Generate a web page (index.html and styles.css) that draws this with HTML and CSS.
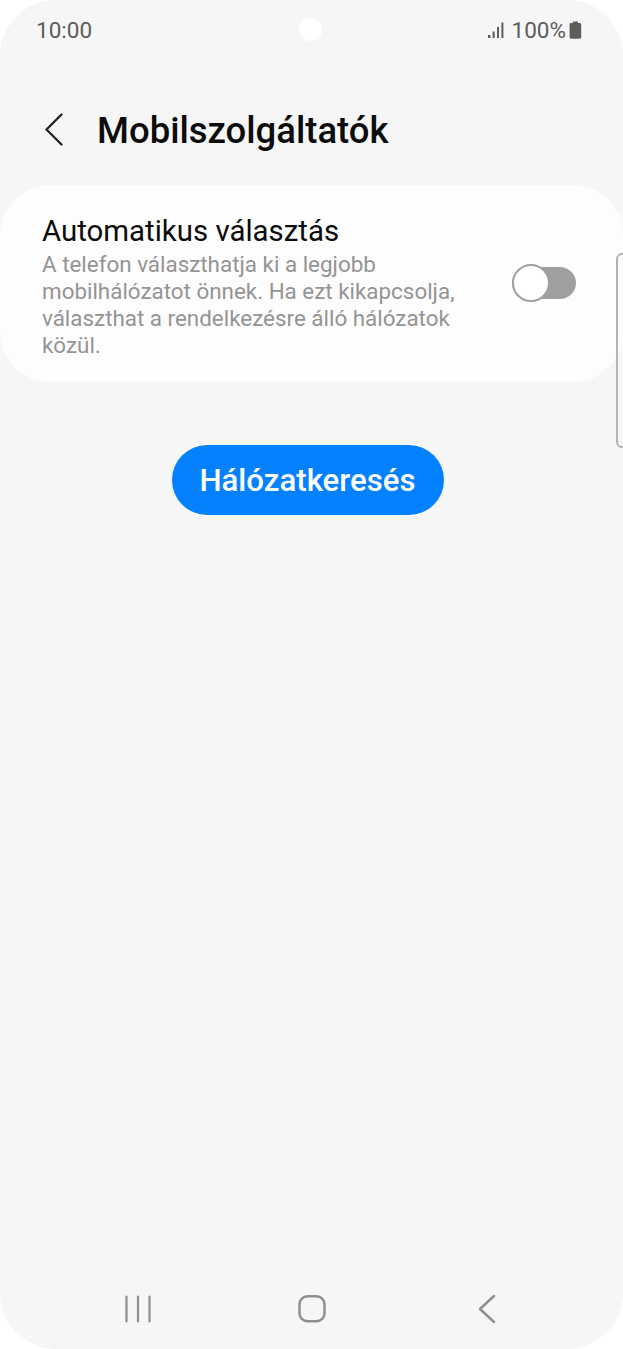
FILE: index.html
```html
<!DOCTYPE html>
<html>
<head>
    <title>Mobilszolgáltatók</title>
    <link rel="stylesheet" href="styles.css">
</head>
<body>
    <div class="phone">
        <!-- Status bar -->
        <div class="status-bar">
            <span class="time">10:00</span>
            <div class="camera"></div>
            <div class="status-right">
                <svg class="signal" width="17" height="17" viewBox="0 0 17 17">
                    <rect x="0" y="13" width="2.4" height="3" fill="#5c5c5c"/>
                    <rect x="4.6" y="9.5" width="2" height="6.5" fill="#5c5c5c"/>
                    <rect x="9" y="5" width="2" height="11" fill="#5c5c5c"/>
                    <rect x="13.4" y="0.5" width="2" height="15.5" fill="#5c5c5c"/>
                </svg>
                <span class="battery-text">100%</span>
                <svg class="battery" width="13" height="18" viewBox="0 0 13 18">
                    <path d="M4 0.5h5v1.6h1.6c1 0 1.6 0.7 1.6 1.6v12.4c0 1-0.7 1.6-1.6 1.6H2.2c-1 0-1.6-0.7-1.6-1.6V3.700c0-1 0.7-1.6 1.600-1.600H4z" fill="#5c5c5c"/>
                </svg>
            </div>
        </div>

        <!-- Header -->
        <div class="header">
            <svg class="back" width="20" height="34" viewBox="0 0 20 34">
                <path d="M17.500 1.500L2.500 16.500 17.500 31.500" fill="none" stroke="#222" stroke-width="2.300" stroke-linecap="round" stroke-linejoin="round"/>
            </svg>
            <h1 class="title">Mobilszolgáltatók</h1>
        </div>

        <!-- Setting card -->
        <div class="card">
            <div class="card-text">
                <h2 class="card-title">Automatikus választás</h2>
                <p class="card-desc">A telefon választhatja ki a legjobb mobilhálózatot önnek. Ha ezt kikapcsolja, választhat a rendelkezésre álló hálózatok közül.</p>
            </div>
            <div class="switch">
                <div class="knob"></div>
            </div>
        </div>

        <div class="actions">
            <button class="search-btn">Hálózatkeresés</button>
        </div>

        <div class="spacer"></div>

        <!-- Navigation bar -->
        <div class="nav-bar">
            <svg width="28" height="28" viewBox="0 0 28 28">
                <path d="M2.500 1.500V26.500M14 1.500V26.500M25.500 1.500V26.500" fill="none" stroke="#8e8e8e" stroke-width="2.200" stroke-linecap="round"/>
            </svg>
            <svg width="28" height="28" viewBox="0 0 28 28">
                <rect x="1.500" y="1.200" width="25" height="25" rx="8" fill="none" stroke="#8e8e8e" stroke-width="2.400"/>
            </svg>
            <svg width="18" height="30" viewBox="0 0 18 30">
                <path d="M16 1L2 14 16 27" fill="none" stroke="#8e8e8e" stroke-width="2.400" stroke-linecap="round" stroke-linejoin="round"/>
            </svg>
        </div>

        <!-- Edge panel handle -->
        <div class="edge-handle"></div>
    </div>
</body>
</html>
```

FILE: styles.css
```css
html, body {
    margin: 0;
    padding: 0;
    background-color: #fff;
}
.phone {
    position: relative;
    width: 623px;
    height: 1349px;
    display: flex;
    flex-direction: column;
    background-color: #f6f6f6;
    border-radius: 56px;
    overflow: hidden;
    font-family: Roboto, "Liberation Sans", sans-serif;
}
.status-bar {
    position: relative;
    height: 60px;
    padding: 0 41px 0 36px;
    display: flex;
    align-items: center;
    justify-content: space-between;
    color: #5c5c5c;
    font-size: 22.500px;
}
.camera {
    position: absolute;
    left: 299px;
    top: 18px;
    width: 23px;
    height: 23px;
    border-radius: 50%;
    background-color: #fff;
}
.status-right {
    display: flex;
    align-items: center;
}
.signal {
    margin-right: 7px;
}
.battery {
    margin-left: 3px;
}
.header {
    height: 125px;
    padding-left: 44px;
    display: flex;
    align-items: flex-start;
}
.back {
    margin-top: 53px;
}
.title {
    margin: 48px 0 0 33px;
    font-size: 36.500px;
    line-height: 46px;
    font-weight: 500;
    color: #0c0c0c;
}
.card {
    height: 197px;
    box-sizing: border-box;
    padding: 29px 47px 0 42px;
    display: flex;
    align-items: flex-start;
    justify-content: space-between;
    background-color: #fdfdfd;
    border-radius: 50px;
}
.card-title {
    margin: 0 0 3px 0;
    font-size: 29.400px;
    line-height: 34px;
    font-weight: 400;
    color: #0c0c0c;
}
.card-text {
    width: 420px;
}
.card-desc {
    margin: 0;
    font-size: 22.400px;
    line-height: 27px;
    color: #949494;
}
.switch {
    position: relative;
    margin-top: 53px;
    width: 64px;
    height: 32px;
    border-radius: 16px;
    background-color: #a0a0a0;
}
.knob {
    position: absolute;
    left: 0;
    top: -3px;
    width: 34px;
    height: 34px;
    border: 2px solid #a0a0a0;
    border-radius: 50%;
    background-color: #fff;
}
.actions {
    display: flex;
    justify-content: center;
    margin-top: 63px;
    padding-right: 8px;
}
.search-btn {
    width: 272px;
    height: 70px;
    border: none;
    border-radius: 35px;
    background-color: #0381fe;
    color: #fff;
    font-family: inherit;
    font-size: 31.200px;
    font-weight: 500;
}
.spacer {
    flex: 1;
}
.nav-bar {
    height: 81px;
    box-sizing: border-box;
    padding: 27px 127px 0 124px;
    display: flex;
    align-items: flex-start;
    justify-content: space-between;
}
.nav-bar svg:nth-child(2) {
    margin-left: -6px;
}
.edge-handle {
    position: absolute;
    left: 616px;
    top: 253px;
    width: 12px;
    height: 195px;
    box-sizing: border-box;
    border: 2px solid #b4b4b4;
    border-radius: 6px;
}
```
